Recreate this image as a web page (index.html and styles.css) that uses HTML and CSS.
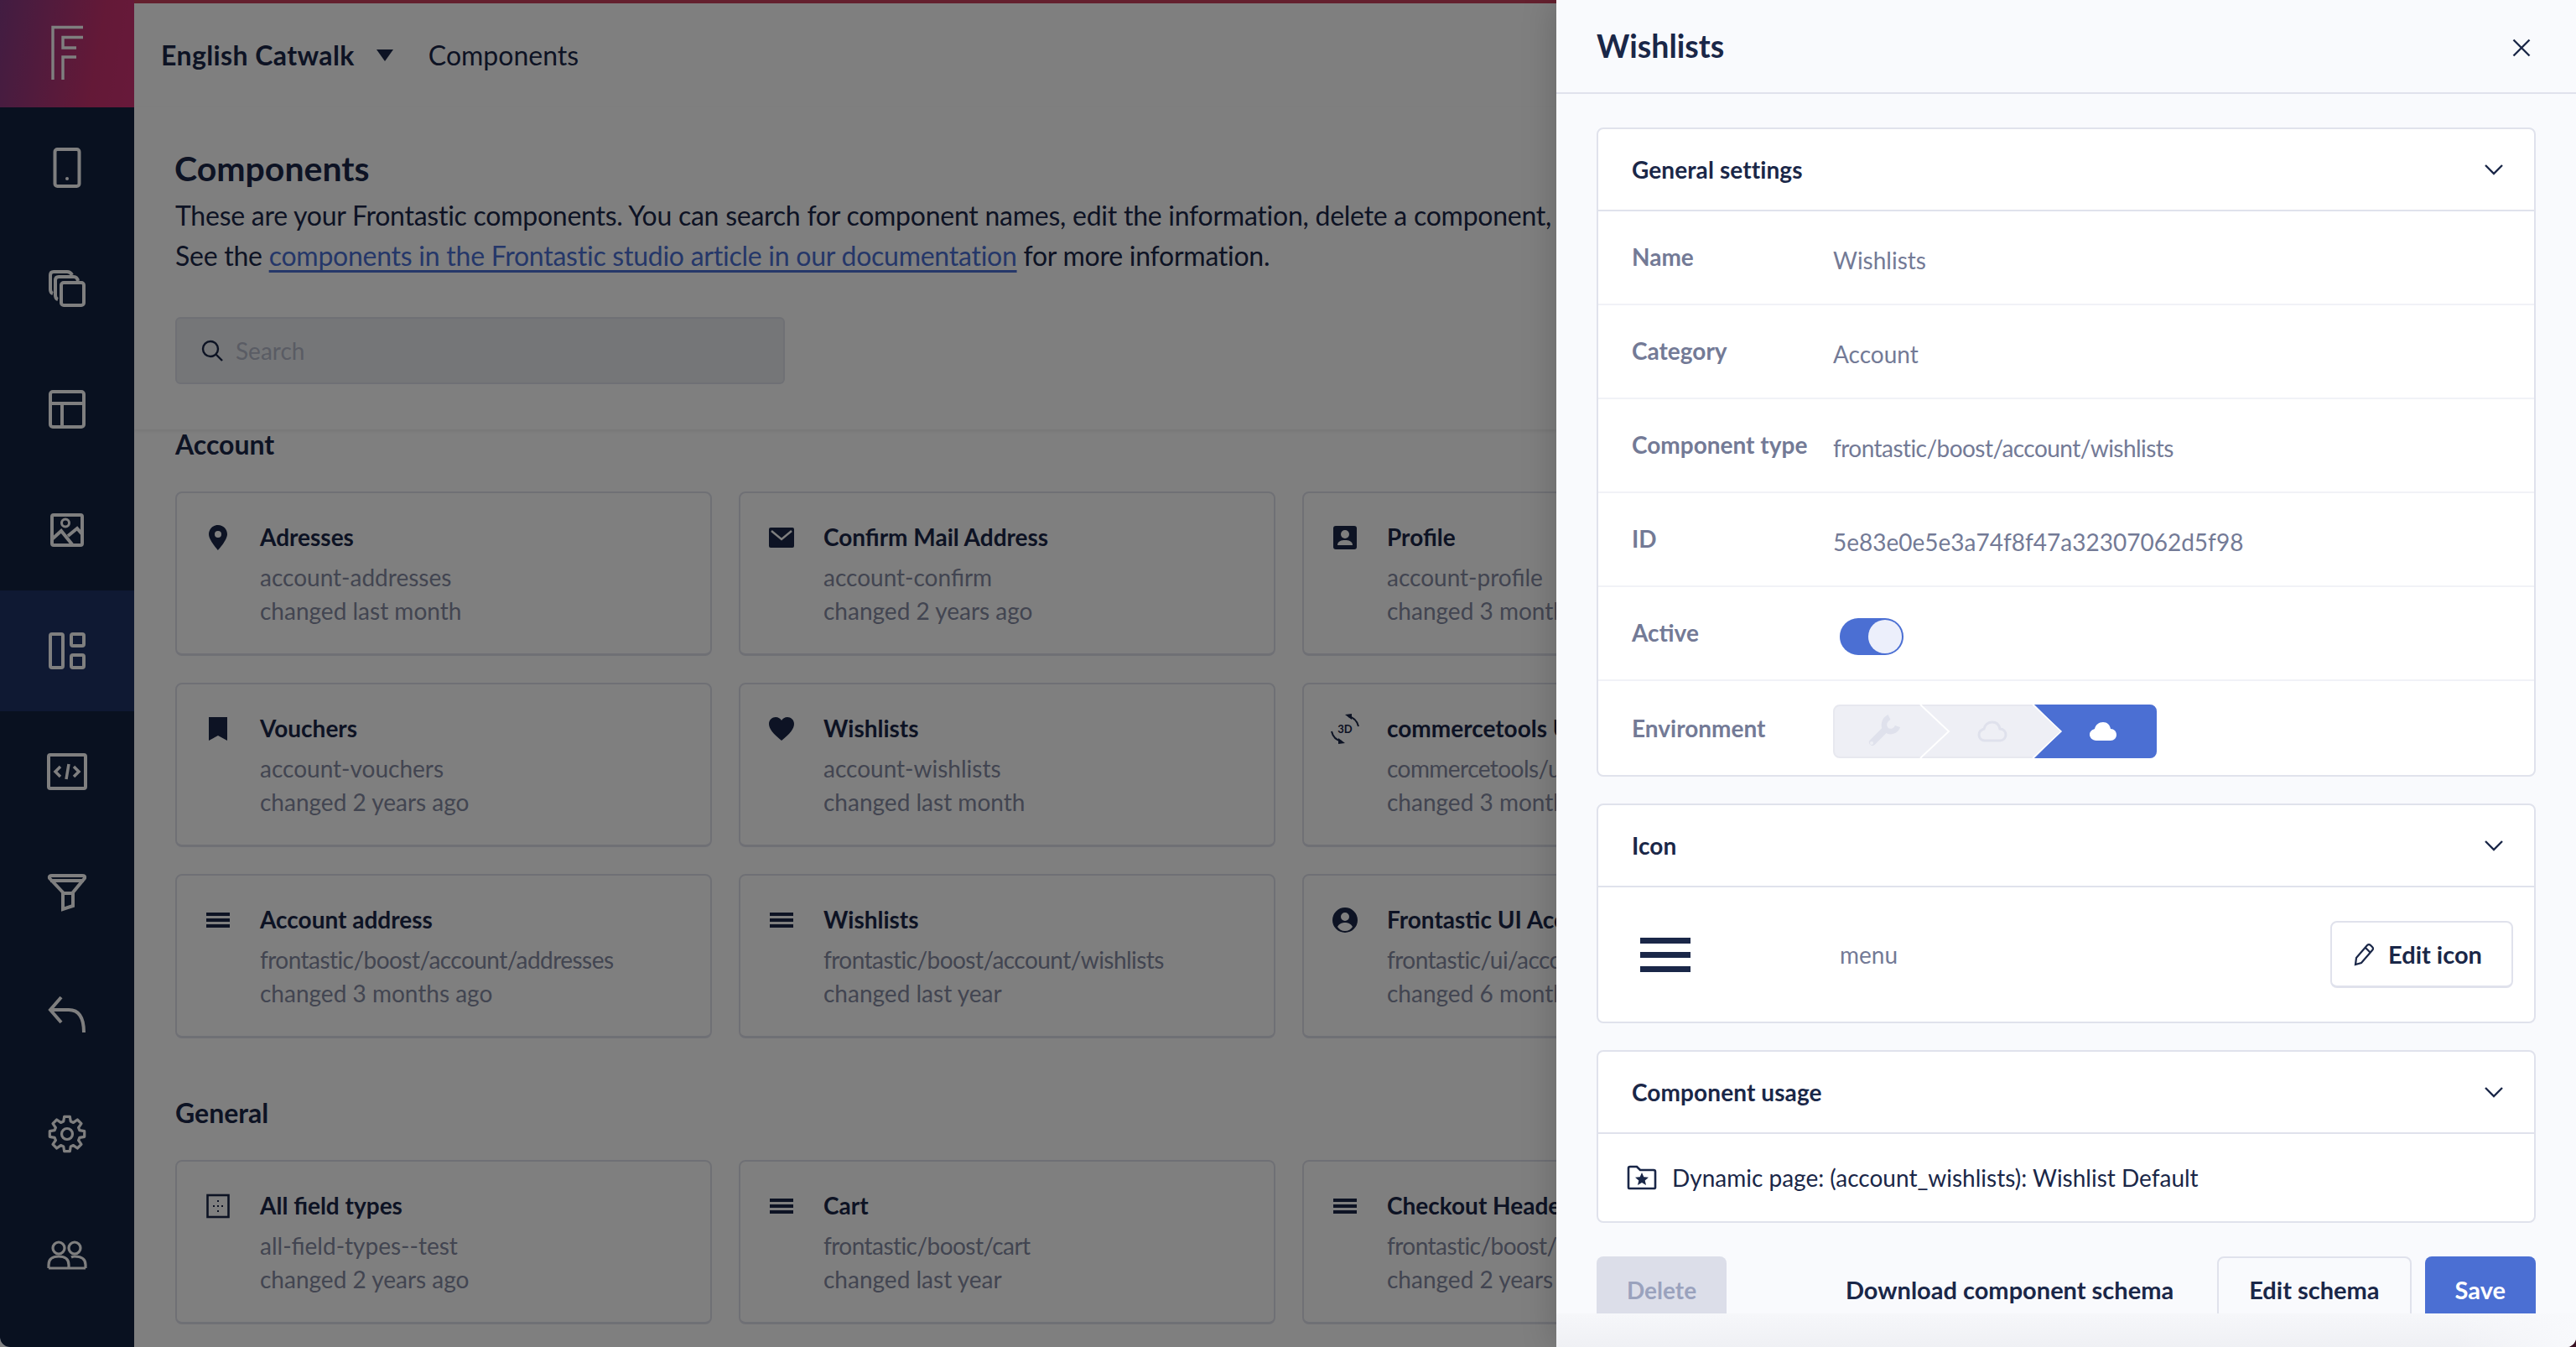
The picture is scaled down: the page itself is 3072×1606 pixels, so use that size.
FILE: index.html
```html
<!DOCTYPE html>
<html lang="en">
<head>
<meta charset="UTF-8" />
<title>Components</title>
<link rel="stylesheet" href="styles.css">
</head>
<body>

<svg class="defs" xmlns="http://www.w3.org/2000/svg">
  <symbol id="i-menu" viewBox="0 0 32 32"><path d="M2 7h28v4H2zM2 14h28v4H2zM2 21h28v4H2z"/></symbol>
  <symbol id="i-chevron" viewBox="0 0 24 14"><path d="M2 2l10 10L22 2" fill="none" stroke="#1a2748" stroke-width="2.4"/></symbol>
</svg>

<div class="app">

  <!-- Left navigation -->
  <nav class="sidebar">
    <div class="logo">
      <svg width="48" height="72" viewBox="0 0 48 72" fill="none" stroke="#fff" stroke-width="3.4">
        <path d="M7 68V5.500h36M19 68V41h16M43 17.500H19V30h16"/>
      </svg>
    </div>
    <a class="nav-item">
      <svg class="nav-icon" viewBox="0 0 48 48"><rect x="9.500" y="2" width="29" height="44" rx="3"/><circle cx="24" cy="37" r="2" class="solid"/></svg>
    </a>
    <a class="nav-item">
      <svg class="nav-icon" viewBox="0 0 48 48"><rect x="17" y="17" width="27" height="27" rx="3"/><path d="M13 37q-3-1-3-5V14q0-4 4-4h18q4 0 5 5M7 30q-3-1-3-5V8q0-4 4-4h16q4 0 6 4"/></svg>
    </a>
    <a class="nav-item">
      <svg class="nav-icon" viewBox="0 0 48 48"><rect x="4" y="3" width="40" height="42" rx="3"/><path d="M4 17h40M18 17v28"/></svg>
    </a>
    <a class="nav-item">
      <svg class="nav-icon" viewBox="0 0 48 48"><rect x="6" y="6" width="36" height="36" rx="2"/><circle cx="22" cy="15.500" r="4.500" stroke-width="3"/><path d="M6 35l11-10 13 16M25 31l11-9 6 7"/></svg>
    </a>
    <a class="nav-item active">
      <svg class="nav-icon" viewBox="0 0 48 48"><rect x="4" y="4" width="15" height="40" rx="2"/><rect x="29" y="4" width="15" height="14" rx="2"/><rect x="29" y="29" width="15" height="15" rx="2"/></svg>
    </a>
    <a class="nav-item">
      <svg class="nav-icon" viewBox="0 0 48 48"><rect x="2" y="4" width="44" height="40" rx="2"/><path d="M16 18l-6 6 6 6M32 18l6 6-6 6M26 15l-3 18" stroke-width="3.500"/></svg>
    </a>
    <a class="nav-item">
      <svg class="nav-icon" viewBox="0 0 48 48"><path d="M6 4h36q4 0 3 3L31 24v16l-12 4V24L3 7q-1-3 3-3zM4 10h40M19 25h12"/></svg>
    </a>
    <a class="nav-item">
      <svg class="nav-icon" viewBox="0 0 48 48"><path d="M17 5L4 20l13 15M4 20h22q18 0 18 27"/></svg>
    </a>
    <a class="nav-item">
      <svg class="nav-icon thin" viewBox="-24 -24 48 48" stroke-linejoin="round"><polygon points="-4.300,-14.900 -3.300,-20.700 3.300,-20.700 4.300,-14.900 7.500,-13.600 12.300,-17 17,-12.300 13.600,-7.500 14.900,-4.300 20.700,-3.300 20.700,3.300 14.900,4.300 13.600,7.500 17,12.300 12.300,17 7.500,13.600 4.300,14.900 3.300,20.700 -3.300,20.700 -4.300,14.900 -7.500,13.600 -12.300,17 -17,12.300 -13.600,7.500 -14.900,4.300 -20.700,3.300 -20.700,-3.300 -14.900,-4.300 -13.600,-7.500 -17,-12.300 -12.300,-17 -7.500,-13.600"/><circle r="6.500"/></svg>
    </a>
    <a class="nav-item">
      <svg class="nav-icon thin" viewBox="0 0 48 48"><circle cx="14" cy="16" r="7"/><circle cx="33" cy="16" r="7"/><path d="M2 40v-4q0-10 12-10t12 10v4M29 27q2-1 4-1 13 0 13 10v4M2 40h44"/></svg>
    </a>
  </nav>

  <main class="main">
    <header class="topbar">
      <strong class="project">English Catwalk</strong>
      <span class="caret"></span>
      <span class="crumb">Components</span>
    </header>

    <section class="intro">
      <h1>Components</h1>
      <p>These are your Frontastic components. You can search for component names, edit the information, delete a component,</p>
      <p>See the <a href="#">components in the Frontastic studio article in our documentation</a> for more information.</p>
      <div class="search">
        <svg width="28" height="28" viewBox="0 0 28 28" fill="none" stroke="#1a2748" stroke-width="2.400"><circle cx="12" cy="12" r="9"/><path d="M18.500 18.500L26 26"/></svg>
        <span>Search</span>
      </div>
    </section>

    <section class="list">
      <h2>Account</h2>
      <div class="grid">
        <div class="card">
          <svg class="card-icon" viewBox="0 0 32 32"><path fill-rule="evenodd" d="M16 1C9.500 1 5 6 5 12c0 7 11 19 11 19s11-12 11-19c0-6-4.500-11-11-11zm0 7a4 4 0 1 1 0 8 4 4 0 0 1 0-8z"/></svg>
          <div><h3>Adresses</h3><p>account-addresses</p><p>changed last month</p></div>
        </div>
        <div class="card">
          <svg class="card-icon" viewBox="0 0 32 32"><rect x="1" y="4" width="30" height="24" rx="2"/><path d="M4 8l12 10L28 8" fill="none" stroke="#fff" stroke-width="2.400"/></svg>
          <div><h3>Confirm Mail Address</h3><p>account-confirm</p><p>changed 2 years ago</p></div>
        </div>
        <div class="card">
          <svg class="card-icon" viewBox="0 0 32 32"><rect x="2" y="2" width="28" height="28" rx="3"/><circle cx="16" cy="12" r="5" fill="#fff"/><path d="M7 25c0-5 5-6 9-6s9 1 9 6z" fill="#fff"/></svg>
          <div><h3>Profile</h3><p>account-profile</p><p>changed 3 months ago</p></div>
        </div>
        <div class="card">
          <svg class="card-icon" viewBox="0 0 32 32"><path d="M5 2h22v28l-11-6-11 6z"/></svg>
          <div><h3>Vouchers</h3><p>account-vouchers</p><p>changed 2 years ago</p></div>
        </div>
        <div class="card">
          <svg class="card-icon" viewBox="0 0 32 32"><path d="M16 30C6 22 1 16 1 10c0-5 4-8 8-8 3 0 6 2 7 4 1-2 4-4 7-4 4 0 8 3 8 8 0 6-5 12-15 20z"/></svg>
          <div><h3>Wishlists</h3><p>account-wishlists</p><p>changed last month</p></div>
        </div>
        <div class="card">
          <svg class="card-icon wide" viewBox="0 0 36 36"><path d="M2 21a16 16 0 0 0 12 12M34 15A16 16 0 0 0 22 3" fill="none" stroke="#1a2748" stroke-width="2"/><path d="M10 29l8 6-8 1zM26 7l-8-6 8-1z"/><text x="18" y="23" text-anchor="middle" class="icon-label">3D</text></svg>
          <div><h3>commercetools UI</h3><p class="path">commercetools/ui</p><p>changed 3 months ago</p></div>
        </div>
        <div class="card">
          <svg class="card-icon"><use href="#i-menu"/></svg>
          <div><h3>Account address</h3><p class="path">frontastic/boost/account/addresses</p><p>changed 3 months ago</p></div>
        </div>
        <div class="card">
          <svg class="card-icon"><use href="#i-menu"/></svg>
          <div><h3>Wishlists</h3><p class="path">frontastic/boost/account/wishlists</p><p>changed last year</p></div>
        </div>
        <div class="card">
          <svg class="card-icon" viewBox="0 0 32 32"><path fill-rule="evenodd" d="M16 1a15 15 0 1 1 0 30 15 15 0 0 1 0-30zm0 6a5 5 0 1 0 0 10 5 5 0 0 0 0-10zM7 24c2 3 5 5 9 5s7-2 9-5c-2-4-6-5-9-5s-7 1-9 5z"/></svg>
          <div><h3>Frontastic UI Account</h3><p class="path">frontastic/ui/account</p><p>changed 6 months ago</p></div>
        </div>
      </div>

      <h2 class="group">General</h2>
      <div class="grid">
        <div class="card">
          <svg class="card-icon" viewBox="0 0 32 32"><rect x="3.500" y="3" width="25" height="26" fill="none" stroke="#1a2748" stroke-width="2.600"/><path d="M15 9h2v2h-2zM15 15h2v2h-2zM15 21h2v2h-2zM10 15h2v2h-2zM20 15h2v2h-2z"/></svg>
          <div><h3>All field types</h3><p>all-field-types--test</p><p>changed 2 years ago</p></div>
        </div>
        <div class="card">
          <svg class="card-icon"><use href="#i-menu"/></svg>
          <div><h3>Cart</h3><p class="path">frontastic/boost/cart</p><p>changed last year</p></div>
        </div>
        <div class="card">
          <svg class="card-icon"><use href="#i-menu"/></svg>
          <div><h3>Checkout Header</h3><p class="path">frontastic/boost/checkout</p><p>changed 2 years ago</p></div>
        </div>
      </div>
    </section>
  </main>

  <div class="overlay"></div>

  <!-- Drawer on top of the list -->
  <aside class="panel">
    <header class="panel-head">
      <h2>Wishlists</h2>
      <svg class="close" width="22" height="22" viewBox="0 0 22 22" fill="none" stroke="#1a2748" stroke-width="2.400"><path d="M1.500 1.500l19 19M20.500 1.500l-19 19"/></svg>
    </header>

    <div class="panel-body">
      <section class="box">
        <div class="box-head"><h3>General settings</h3><svg class="chevron"><use href="#i-chevron"/></svg></div>
        <div class="row"><label>Name</label><span>Wishlists</span></div>
        <div class="row"><label>Category</label><span>Account</span></div>
        <div class="row"><label>Component type</label><span class="path">frontastic/boost/account/wishlists</span></div>
        <div class="row"><label>ID</label><span>5e83e0e5e3a74f8f47a32307062d5f98</span></div>
        <div class="row"><label>Active</label><div class="toggle"><i></i></div></div>
        <div class="row last">
          <label class="plain">Environment</label>
          <svg class="env" width="386" height="64" viewBox="0 0 386 64">
            <rect x="1" y="1" width="384" height="62" rx="7" fill="#eeeff5" stroke="#e7e8ef" stroke-width="2"/>
            <path d="M104 0l34 32-34 32" fill="none" stroke="#fff" stroke-width="2"/>
            <path d="M240 0h138a8 8 0 0 1 8 8v48a8 8 0 0 1-8 8H240l32-32z" fill="#4b6fd3"/>
            <path d="M238 0l34 32-34 32" fill="none" stroke="#fff" stroke-width="1.500"/>
            <path d="M47 45l15-15" stroke="#dfe1ec" stroke-width="8" stroke-linecap="round"/>
            <path d="M67 15c-6 3-8 10-4 15 5 4 12 2 14-4" fill="none" stroke="#dfe1ec" stroke-width="6.500"/>
            <circle cx="46" cy="46" r="2" fill="#eeeff5"/>
            <path d="M181 43c-5 0-7-4-7-7 0-4 3-6 6-7 1-5 5-8 10-8s8 3 9 8c4 0 7 3 7 7s-3 7-7 7z" fill="none" stroke="#dfe1ec" stroke-width="3"/>
            <path d="M314 43c-5 0-8-4-8-7 0-4 3-6 6-7 1-5 5-8 10-8s8 3 9 8c4 0 7 3 7 7s-3 7-7 7z" fill="#fff"/>
          </svg>
        </div>
      </section>

      <section class="box">
        <div class="box-head"><h3>Icon</h3><svg class="chevron"><use href="#i-chevron"/></svg></div>
        <div class="icon-body">
          <div class="big-menu"><i></i><i></i><i></i></div>
          <span class="icon-name">menu</span>
          <button class="btn edit">
            <svg width="26" height="28" viewBox="0 0 26 28" fill="none" stroke="#1a2748" stroke-width="2.200"><path d="M3 26l1-8L17 3q2-2 4 0l2 2q2 2 0 4L10 24zM15 6l6 6"/></svg>
            Edit icon
          </button>
        </div>
      </section>

      <section class="box">
        <div class="box-head"><h3>Component usage</h3><svg class="chevron"><use href="#i-chevron"/></svg></div>
        <div class="usage">
          <svg width="36" height="30" viewBox="0 0 36 30"><path d="M2 27V4q0-2 2-2h8l4 4h16q2 0 2 2v19q0 1-2 1H3q-1 0-1-1z" fill="none" stroke="#1a2748" stroke-width="2.600"/><path d="M18 9l2.300 5.200 5.700.5-4.300 3.800 1.300 5.500-5-3-5 3 1.300-5.500-4.300-3.800 5.700-.5z" fill="#1a2748"/></svg>
          <span>Dynamic page: (account_wishlists): Wishlist Default</span>
        </div>
      </section>

      <footer class="actions">
        <button class="btn delete">Delete</button>
        <button class="btn link">Download component schema</button>
        <button class="btn outline">Edit schema</button>
        <button class="btn save">Save</button>
      </footer>
    </div>
    <div class="panel-fade"></div>
  </aside>
</div>

</body>
</html>
```

FILE: styles.css
```css
/* General styling */
* {
  box-sizing: border-box;
}

html, body {
  margin: 0;
  height: 100%;
}

body {
  background: linear-gradient(90deg, #808080 50%, #3a1224 50%);
  font-family: Lato, 'Noto Sans', sans-serif;
  font-size: 28px;
  line-height: 40px;
  color: #1a2748;
  overflow: hidden;
}

.defs {
  display: none;
}

.app {
  position: relative;
  display: flex;
  height: 1606px;
  overflow: hidden;
  background: #fff;
  border-radius: 0 0 12px 12px;
}

/* Sidebar */
.sidebar {
  flex: 0 0 160px;
  background: #132240;
}

.logo {
  height: 128px;
  padding-top: 27px;
  display: flex;
  justify-content: center;
  background: linear-gradient(100deg, #843a84 0%, #c8326f 70%, #d03275 100%);
}

.nav-item {
  display: flex;
  height: 144px;
  align-items: center;
  justify-content: center;
}

.nav-item.active {
  background: #1f3266;
}

.nav-icon {
  width: 48px;
  height: 48px;
  fill: none;
  stroke: #fff;
  stroke-width: 4;
}

.nav-icon.thin {
  stroke-width: 3.2;
}

.nav-icon .solid {
  fill: #fff;
  stroke: none;
}

/* Main column, ends where the drawer starts */
.main {
  flex: 0 0 1696px;
  display: flex;
  flex-direction: column;
  overflow: hidden;
}

.topbar {
  flex: 0 0 128px;
  display: flex;
  align-items: center;
  padding-left: 32px;
  border-top: 4px solid #c8405c;
  font-size: 32px;
}

.project {
  font-weight: 700;
  letter-spacing: 0.4px;
}

.caret {
  margin: 0 42px 0 26px;
  border-left: 10px solid transparent;
  border-right: 10px solid transparent;
  border-top: 14px solid #1a2748;
}

.intro {
  position: relative;
  z-index: 1;
  flex: 0 0 384px;
  padding: 49px 0 0 49px;
  background: #fff;
  box-shadow: 0 2px 4px rgba(0, 0, 0, 0.08);
  font-size: 32px;
  line-height: 48px;
  white-space: nowrap;
}

.intro h1 {
  margin: 0 0 8px -1px;
  font-size: 41px;
  line-height: 48px;
  font-weight: 700;
}

.intro p {
  margin: 0;
  letter-spacing: -0.25px;
}

.intro a {
  color: #4b6fd3;
  text-decoration: underline;
  text-underline-offset: 5px;
}

.search {
  display: flex;
  align-items: center;
  gap: 14px;
  width: 727px;
  height: 80px;
  margin-top: 49px;
  padding-left: 28px;
  background: #eaedf1;
  border: 2px solid #dfe1ea;
  border-radius: 6px;
  font-size: 28px;
  color: #b4b8c8;
}

.list {
  flex: 1;
  padding-left: 49px;
}

.list h2 {
  margin: 0 0 38px;
  font-size: 32px;
  line-height: 36px;
  font-weight: 700;
}

.list h2.group {
  margin: 71px 0 38px;
}

.grid {
  display: grid;
  grid-template-columns: repeat(3, 640px);
  gap: 32px;
}

.card {
  display: flex;
  height: 196px;
  padding: 32px;
  background: #fff;
  border: 2px solid #dfe1ea;
  border-bottom-width: 3px;
  border-radius: 8px;
  white-space: nowrap;
}

.card h3 {
  margin: 0 0 8px;
  font-size: 28px;
  line-height: 40px;
  font-weight: 700;
}

.card p {
  margin: 0;
  color: #858aa2;
}

.path {
  letter-spacing: -0.55px;
}

.card-icon {
  flex: none;
  width: 32px;
  height: 32px;
  margin: 5px 34px 0 1px;
  fill: #1a2748;
}

.card-icon.wide {
  width: 36px;
  height: 36px;
  margin: 3px 32px 0 -1px;
}

.icon-label {
  font-size: 13px;
  font-weight: 700;
}

/* Drawer */
.overlay {
  position: absolute;
  inset: 0;
  z-index: 2;
  background: rgba(0, 0, 0, 0.5);
}

.panel {
  position: absolute;
  top: 0;
  right: 0;
  bottom: 0;
  z-index: 3;
  width: 1216px;
  display: flex;
  flex-direction: column;
  background: #f9fafd;
  box-shadow: 0 0 40px rgba(0, 0, 0, 0.2);
}

.panel-head {
  flex: 0 0 112px;
  display: flex;
  align-items: center;
  justify-content: space-between;
  padding: 0 54px 0 48px;
  border-bottom: 2px solid #e0e2ec;
}

.panel-head h2 {
  margin: 0;
  font-size: 37.5px;
  font-weight: 700;
}

.close {
  margin-top: 4px;
}

.panel-body {
  flex: 1;
  min-height: 0;
  overflow: hidden;
  padding: 40px 48px 0;
}

.panel-fade {
  flex: 0 0 40px;
  background:
    linear-gradient(90deg, rgba(248, 249, 252, 0) 88%, #f8f9fc 100%),
    linear-gradient(180deg, #f6f7fa 0%, #eff0f4 100%);
}

.box {
  margin-bottom: 32px;
  background: #fff;
  border: 2px solid #e0e2ec;
  border-radius: 8px;
}

.box-head {
  display: flex;
  height: 98px;
  align-items: center;
  justify-content: space-between;
  padding: 0 36px 0 40px;
  border-bottom: 2px solid #e0e2ec;
}

.box-head h3 {
  margin: 0;
  font-size: 28px;
  font-weight: 700;
  letter-spacing: 0.1px;
}

.chevron {
  width: 24px;
  height: 14px;
}

.row {
  display: flex;
  height: 112px;
  align-items: center;
  padding-left: 40px;
  border-bottom: 2px solid #f1f2f7;
  color: #737a96;
}

.row.last {
  border-bottom: 0;
}

.row label {
  flex: 0 0 240px;
  margin-bottom: 2px;
  font-weight: 700;
  white-space: nowrap;
}

.row label.plain {
  margin-bottom: 0;
}

.row span {
  margin-top: 6px;
}

.toggle {
  display: flex;
  justify-content: flex-end;
  width: 76px;
  height: 44px;
  margin: 8px 0 0 8px;
  padding: 2px;
  background: #4b6fd3;
  border-radius: 22px;
}

.toggle i {
  width: 40px;
  height: 40px;
  background: #eceffb;
  border-radius: 50%;
}

.env {
  margin-top: 8px;
}

.icon-body {
  display: flex;
  height: 160px;
  align-items: center;
  padding: 0 25px 0 50px;
}

.big-menu {
  display: flex;
  flex-direction: column;
  gap: 10px;
  width: 60px;
}

.big-menu i {
  height: 7px;
  background: #1a2748;
}

.icon-name {
  margin-left: 178px;
  color: #737a96;
}

.btn {
  display: flex;
  align-items: center;
  height: 80px;
  padding: 0 36px;
  border: 0;
  border-radius: 8px;
  background: none;
  font: 700 29px/40px Lato, 'Noto Sans', sans-serif;
  color: #1a2748;
  white-space: nowrap;
}

.btn.edit {
  gap: 16px;
  width: 218px;
  margin-left: auto;
  padding: 0 10px 0 0;
  justify-content: center;
  background: #fff;
  border: 2px solid #e0e2ec;
  border-bottom-width: 3px;
}

.usage {
  display: flex;
  height: 104px;
  align-items: center;
  gap: 18px;
  padding-left: 34px;
}

.actions {
  display: flex;
  align-items: flex-start;
  gap: 16px;
  margin-top: 40px;
}

.btn.delete {
  margin-right: auto;
  background: #dcdee9;
  color: #9aa2bd;
  font-size: 28px;
}

.btn.outline {
  border: 2px solid #e0e2ec;
}

.btn.save {
  background: #4b6fd3;
  color: #fff;
}
```
